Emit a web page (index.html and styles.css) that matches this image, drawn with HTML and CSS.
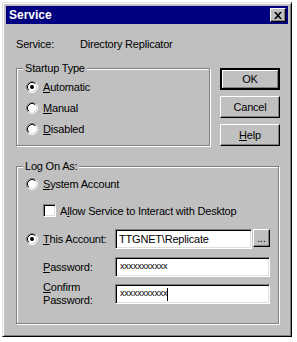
FILE: index.html
```html
<!DOCTYPE html>
<html>
<head>
<meta charset="utf-8">
<link rel="stylesheet" href="styles.css">
</head>
<body>
<div class="window">
  <div class="titlebar">
    <span class="title">Service</span>
    <span class="close">
      <svg width="8" height="7" viewBox="0 0 8 7"><path d="M0 0h2l2 2.3 2-2.3h2l-3 3.5 3 3.5h-2l-2-2.3-2 2.3h-2l3-3.5z" fill="#000"/></svg>
    </span>
  </div>
  <div class="client">
    <div class="service-row"><span class="service-label">Service:</span><span>Directory Replicator</span></div>
    <div class="top-row">
      <div class="group startup">
        <span class="legend">Startup Type</span>
        <div class="row">
          <svg class="radio" width="12" height="12" viewBox="0 0 12 12"><circle cx="6" cy="6" r="4.5" fill="#fff"/><path d="M2.11 9.89A5.5 5.5 0 0 1 9.89 2.11" fill="none" stroke="#808080"/><path d="M9.89 2.11A5.5 5.5 0 0 1 2.11 9.89" fill="none" stroke="#fff"/><path d="M2.82 9.18A4.5 4.5 0 0 1 9.18 2.82" fill="none" stroke="#000"/><path d="M9.18 2.82A4.5 4.5 0 0 1 2.82 9.18" fill="none" stroke="#dfdfdf"/><circle cx="6" cy="6" r="2" fill="#000"/></svg>
          <span><u>A</u>utomatic</span>
        </div>
        <div class="row">
          <svg class="radio" width="12" height="12" viewBox="0 0 12 12"><circle cx="6" cy="6" r="4.5" fill="#fff"/><path d="M2.11 9.89A5.5 5.5 0 0 1 9.89 2.11" fill="none" stroke="#808080"/><path d="M9.89 2.11A5.5 5.5 0 0 1 2.11 9.89" fill="none" stroke="#fff"/><path d="M2.82 9.18A4.5 4.5 0 0 1 9.18 2.82" fill="none" stroke="#000"/><path d="M9.18 2.82A4.5 4.5 0 0 1 2.82 9.18" fill="none" stroke="#dfdfdf"/></svg>
          <span><u>M</u>anual</span>
        </div>
        <div class="row">
          <svg class="radio" width="12" height="12" viewBox="0 0 12 12"><circle cx="6" cy="6" r="4.5" fill="#fff"/><path d="M2.11 9.89A5.5 5.5 0 0 1 9.89 2.11" fill="none" stroke="#808080"/><path d="M9.89 2.11A5.5 5.5 0 0 1 2.11 9.89" fill="none" stroke="#fff"/><path d="M2.82 9.18A4.5 4.5 0 0 1 9.18 2.82" fill="none" stroke="#000"/><path d="M9.18 2.82A4.5 4.5 0 0 1 2.82 9.18" fill="none" stroke="#dfdfdf"/></svg>
          <span><u>D</u>isabled</span>
        </div>
      </div>
      <div class="buttons">
        <div class="btn default"><span>OK</span></div>
        <div class="btn"><span>Cancel</span></div>
        <div class="btn"><span><u>H</u>elp</span></div>
      </div>
    </div>
    <div class="group logon">
      <span class="legend">Log On As:</span>
      <div class="row">
        <svg class="radio" width="12" height="12" viewBox="0 0 12 12"><circle cx="6" cy="6" r="4.5" fill="#fff"/><path d="M2.11 9.89A5.5 5.5 0 0 1 9.89 2.11" fill="none" stroke="#808080"/><path d="M9.89 2.11A5.5 5.5 0 0 1 2.11 9.89" fill="none" stroke="#fff"/><path d="M2.82 9.18A4.5 4.5 0 0 1 9.18 2.82" fill="none" stroke="#000"/><path d="M9.18 2.82A4.5 4.5 0 0 1 2.82 9.18" fill="none" stroke="#dfdfdf"/></svg>
        <span><u>S</u>ystem Account</span>
      </div>
      <div class="row check-row">
        <span class="checkbox"></span>
        <span>A<u>l</u>low Service to Interact with Desktop</span>
      </div>
      <div class="row account-row">
        <svg class="radio" width="12" height="12" viewBox="0 0 12 12"><circle cx="6" cy="6" r="4.5" fill="#fff"/><path d="M2.11 9.89A5.5 5.5 0 0 1 9.89 2.11" fill="none" stroke="#808080"/><path d="M9.89 2.11A5.5 5.5 0 0 1 2.11 9.89" fill="none" stroke="#fff"/><path d="M2.82 9.18A4.5 4.5 0 0 1 9.18 2.82" fill="none" stroke="#000"/><path d="M9.18 2.82A4.5 4.5 0 0 1 2.82 9.18" fill="none" stroke="#dfdfdf"/><circle cx="6" cy="6" r="2" fill="#000"/></svg>
        <span class="account-label"><u>T</u>his Account:</span>
        <div class="input account-input">TTGNET\Replicate</div>
        <div class="btn browse"><span>...</span></div>
      </div>
      <div class="row field-row">
        <span class="field-label"><u>P</u>assword:</span>
        <div class="input pw"><span class="stars">xxxxxxxxxxx</span></div>
      </div>
      <div class="row field-row confirm-row">
        <span class="field-label two-line"><u>C</u>onfirm<br>Password:</span>
        <div class="input pw"><span class="stars">xxxxxxxxxxx</span><span class="caret"></span></div>
      </div>
    </div>
  </div>
</div>
</body>
</html>
```

FILE: styles.css
```css
* { box-sizing: border-box; }

body {
  margin: 0;
  background: #fff;
  font-family: "Liberation Sans", Arial, sans-serif;
  font-size: 11px;
  letter-spacing: -0.2px;
  color: #000;
}

.window {
  margin: 2px 0 0 2px;
  width: 290px;
  height: 335px;
  background: #c0c0c0;
  border: 1px solid;
  border-color: #dfdfdf #000 #000 #dfdfdf;
  box-shadow: inset 1px 1px #fff, inset -1px -1px #808080;
  padding: 3px;
}

.titlebar {
  height: 18px;
  background: #000080;
  color: #fff;
  display: flex;
  align-items: center;
  justify-content: space-between;
  padding: 0 2px 0 3px;
}

.title {
  font-weight: bold;
  font-size: 12px;
  letter-spacing: 0;
  line-height: 18px;
}

.close {
  width: 16px;
  height: 14px;
  background: #c0c0c0;
  border: 1px solid;
  border-color: #fff #000 #000 #fff;
  box-shadow: inset -1px -1px #808080;
  display: flex;
  align-items: center;
  justify-content: center;
  padding-right: 1px;
}

.client {
  padding: 13px 8px 0 10px;
}

.service-row {
  display: flex;
  line-height: 14px;
}

.service-label {
  width: 64px;
}

.top-row {
  margin-top: 17px;
  display: flex;
  justify-content: space-between;
  align-items: flex-start;
}

.group {
  position: relative;
  border: 1px solid #808080;
  box-shadow: inset 1px 1px #fff, 1px 1px #fff;
}

.legend {
  position: absolute;
  top: -8px;
  left: 6px;
  padding: 0 2px;
  line-height: 14px;
  background: #c0c0c0;
}

.startup {
  width: 194px;
  padding: 7px 0 6px 9px;
}

.logon {
  margin-top: 20px;
  width: 263px;
  padding: 6px 0 16px 9px;
}

.row {
  display: flex;
  align-items: center;
  height: 21px;
}

.radio {
  flex: none;
  margin-right: 5px;
}

.buttons {
  display: flex;
  flex-direction: column;
  gap: 6px;
}

.btn {
  width: 60px;
  height: 22px;
  border: 1px solid;
  border-color: #fff #000 #000 #fff;
  box-shadow: inset -1px -1px #808080;
  display: flex;
  align-items: center;
  justify-content: center;
  line-height: 13px;
}

.btn.default {
  border: 2px solid;
  border-color: #000;
  box-shadow: inset 1px 1px #fff, inset -1px -1px #808080;
}

.check-row {
  margin-top: 6px;
  padding-left: 17px;
}

.checkbox {
  flex: none;
  width: 13px;
  height: 13px;
  margin-right: 4px;
  background: #fff;
  border: 1px solid;
  border-color: #808080 #fff #fff #808080;
  box-shadow: inset 1px 1px #000, inset -1px -1px #dfdfdf;
}

.account-row {
  margin-top: 8px;
  height: 20px;
}

.account-label {
  width: 72px;
}

.input {
  height: 20px;
  background: #fff;
  border: 1px solid;
  border-color: #808080 #fff #fff #808080;
  box-shadow: inset 1px 1px #000, inset -1px -1px #dfdfdf;
  padding: 0 3px;
  display: flex;
  align-items: center;
  line-height: 14px;
}

.account-input {
  width: 137px;
}

.btn.browse {
  width: 17px;
  height: 18px;
  margin-left: 1px;
  align-self: flex-start;
}

.field-row {
  margin-top: 8px;
  height: 20px;
  padding-left: 17px;
}

.confirm-row {
  margin-top: 4px;
  height: 26px;
}

.field-label {
  width: 72px;
  line-height: 13px;
}

.pw {
  width: 155px;
  padding-left: 4px;
}

.stars {
  font-size: 9px;
  line-height: 10px;
  margin-top: -2px;
}

.caret {
  display: inline-block;
  width: 1px;
  height: 13px;
  background: #000;
}
```
